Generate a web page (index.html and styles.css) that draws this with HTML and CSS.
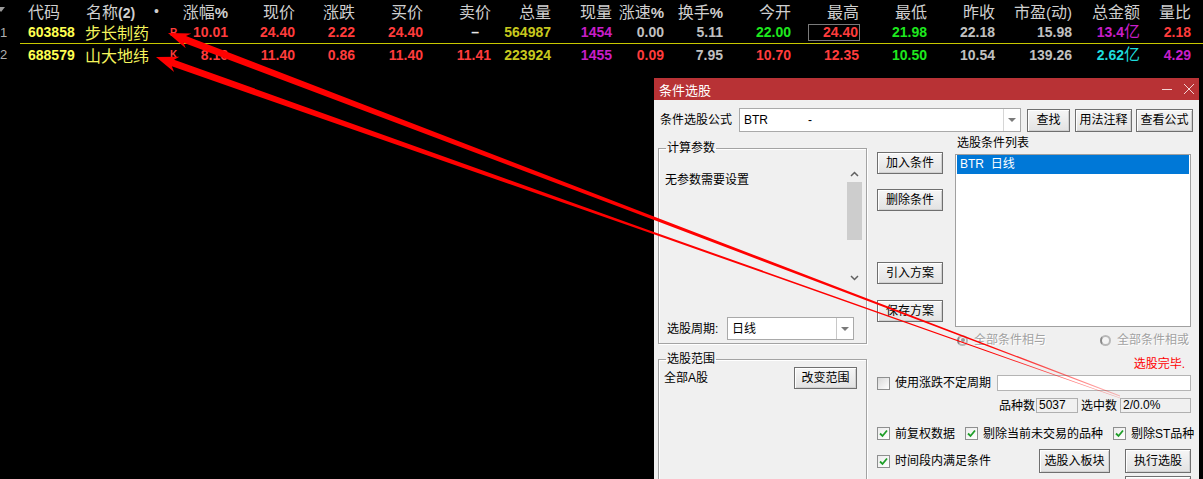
FILE: index.html
```html
<!DOCTYPE html>
<html lang="zh-CN">
<head>
<meta charset="utf-8">
<title>条件选股</title>
<link rel="stylesheet" href="styles.css">
</head>
<body>
<div class="quote">
  <div class="grid head">
    <span class="c idx"><i class="tri"></i></span>
    <span class="c l">代码</span>
    <span class="c l hname">名称<b>(2)</b></span>
    <span class="c l hdot">•</span>
    <span class="c">涨幅<b>%</b></span>
    <span class="c">现价</span>
    <span class="c">涨跌</span>
    <span class="c">买价</span>
    <span class="c">卖价</span>
    <span class="c">总量</span>
    <span class="c">现量</span>
    <span class="c">涨速<b>%</b></span>
    <span class="c">换手<b>%</b></span>
    <span class="c">今开</span>
    <span class="c">最高</span>
    <span class="c">最低</span>
    <span class="c">昨收</span>
    <span class="c">市盈<span class="par">(</span>动<span class="par">)</span></span>
    <span class="c">总金额</span>
    <span class="c">量比</span>
  </div>
  <div class="grid row r1">
    <span class="c l idx">1</span>
    <span class="c l code">603858</span>
    <span class="c l name">步长制药</span>
    <span class="c l mark">R</span>
    <span class="c red">10.01</span>
    <span class="c red">24.40</span>
    <span class="c red">2.22</span>
    <span class="c red">24.40</span>
    <span class="c wht"><span class="dash">–</span></span>
    <span class="c yel">564987</span>
    <span class="c mag">1454</span>
    <span class="c gry">0.00</span>
    <span class="c gry">5.11</span>
    <span class="c grn">22.00</span>
    <span class="c red"><span class="boxed">24.40</span></span>
    <span class="c grn">21.98</span>
    <span class="c gry">22.18</span>
    <span class="c gry">15.98</span>
    <span class="c mag">13.4<span class="yi">亿</span></span>
    <span class="c red">2.18</span>
  </div>
  <div class="sep"></div>
  <div class="grid row r2">
    <span class="c l idx">2</span>
    <span class="c l code">688579</span>
    <span class="c l name">山大地纬</span>
    <span class="c l mark">K</span>
    <span class="c red">8.16</span>
    <span class="c red">11.40</span>
    <span class="c red">0.86</span>
    <span class="c red">11.40</span>
    <span class="c red">11.41</span>
    <span class="c yel">223924</span>
    <span class="c mag">1455</span>
    <span class="c red">0.09</span>
    <span class="c gry">7.95</span>
    <span class="c red">10.70</span>
    <span class="c red">12.35</span>
    <span class="c grn">10.50</span>
    <span class="c gry">10.54</span>
    <span class="c gry">139.26</span>
    <span class="c cyn">2.62<span class="yi">亿</span></span>
    <span class="c mag">4.29</span>
  </div>
</div>

<div class="dlg">
  <div class="titlebar">
    <span class="ttl">条件选股</span>
    <span class="winctl">
      <svg width="12" height="12" viewBox="0 0 12 12" class="wmin"><path d="M1 6.5 H11" stroke="#f2d4d4" stroke-width="1"/></svg>
      <svg width="12" height="12" viewBox="0 0 12 12" class="wclose"><path d="M1 1 L11 11 M11 1 L1 11" stroke="#f2d4d4" stroke-width="1"/></svg>
    </span>
  </div>
  <div class="dbody">
    <div class="frow">
      <span class="flabel">条件选股公式</span>
      <div class="combo fcombo">
        <span class="ctext"><span class="cname">BTR</span><span>-</span></span>
        <span class="drop"><i class="caret"></i></span>
      </div>
      <button class="btn b-find">查找</button>
      <button class="btn b-use">用法注释</button>
      <button class="btn b-view">查看公式</button>
    </div>

    <div class="main">
      <div class="leftcol">
        <fieldset class="grp g1">
          <legend>计算参数</legend>
          <div class="params">
            <div class="ptext">无参数需要设置</div>
            <div class="vscroll">
              <span class="sarrow up">
                <svg width="9" height="6" viewBox="0 0 9 6"><path d="M1 5 L4.5 1.5 L8 5" fill="none" stroke="#606060" stroke-width="1.5"/></svg>
              </span>
              <span class="thumb"></span>
              <span class="sarrow down">
                <svg width="9" height="6" viewBox="0 0 9 6"><path d="M1 1 L4.5 4.5 L8 1" fill="none" stroke="#606060" stroke-width="1.5"/></svg>
              </span>
            </div>
          </div>
          <div class="period">
            <span class="plabel">选股周期:</span>
            <div class="combo pcombo">
              <span class="ctext">日线</span>
              <span class="drop"><i class="caret"></i></span>
            </div>
          </div>
        </fieldset>
        <fieldset class="grp g2">
          <legend>选股范围</legend>
          <div class="range">
            <span class="rtext">全部A股</span>
            <button class="btn b-range">改变范围</button>
          </div>
        </fieldset>
      </div>

      <div class="rightarea">
        <div class="rtop">
          <div class="midbtns">
            <button class="btn mb mb1">加入条件</button>
            <button class="btn mb mb2">删除条件</button>
            <button class="btn mb mb3">引入方案</button>
            <button class="btn mb mb4">保存方案</button>
          </div>
          <div class="listcol">
            <div class="llabel">选股条件列表</div>
            <div class="listbox">
              <div class="litem sel">BTR&nbsp;&nbsp;日线</div>
            </div>
            <div class="radios">
              <span class="radio on"><i class="rb"></i><span class="dis">全部条件相与</span></span>
              <span class="radio"><i class="rb"></i><span class="dis">全部条件相或</span></span>
            </div>
            <div class="done">选股完毕.</div>
          </div>
        </div>

        <div class="crow c-period">
          <span class="cb"></span><span class="ctx">使用涨跌不定周期</span>
          <span class="tinput"></span>
        </div>
        <div class="counts">
          <span>品种数</span><span class="field f1">5037</span>
          <span class="l2">选中数</span><span class="field f2">2/0.0%</span>
        </div>
        <div class="crow c-opts">
          <span class="opt"><span class="cb on"><svg width="11" height="11" viewBox="0 0 11 11"><path d="M2 5.5 L4.5 8 L9 2.5" fill="none" stroke="#1e9e28" stroke-width="1.8"/></svg></span><span class="ctx">前复权数据</span></span>
          <span class="opt"><span class="cb on"><svg width="11" height="11" viewBox="0 0 11 11"><path d="M2 5.5 L4.5 8 L9 2.5" fill="none" stroke="#1e9e28" stroke-width="1.8"/></svg></span><span class="ctx">剔除当前未交易的品种</span></span>
          <span class="opt"><span class="cb on"><svg width="11" height="11" viewBox="0 0 11 11"><path d="M2 5.5 L4.5 8 L9 2.5" fill="none" stroke="#1e9e28" stroke-width="1.8"/></svg></span><span class="ctx">剔除ST品种</span></span>
        </div>
        <div class="crow c-last">
          <span class="opt"><span class="cb on"><svg width="11" height="11" viewBox="0 0 11 11"><path d="M2 5.5 L4.5 8 L9 2.5" fill="none" stroke="#1e9e28" stroke-width="1.8"/></svg></span><span class="ctx">时间段内满足条件</span></span>
          <button class="btn b-block">选股入板块</button>
          <button class="btn b-run">执行选股</button>
        </div>
        <div class="crow c-more">
          <button class="btn b-run" aria-label="关闭"></button>
        </div>
      </div>
    </div>
  </div>
</div>

<svg class="arrows" width="1203" height="479" viewBox="0 0 1203 479">
  <defs>
    <linearGradient id="fade" gradientUnits="userSpaceOnUse" x1="150" y1="0" x2="1120" y2="0">
      <stop offset="0" stop-color="#ff0000"/>
      <stop offset="0.86" stop-color="#ff0000"/>
      <stop offset="1" stop-color="#ff0000" stop-opacity="0.25"/>
    </linearGradient>
  </defs>
  <polygon points="168,33 191.4,33.4 186.0,36.1 650.6,215.3 1120.1,395.6 1119.9,396.4 649.4,218.3 183.6,42.7 185.7,48.3" fill="url(#fade)"/>
  <polygon points="156,57 179.4,56.8 174.1,59.7 650.4,230.7 1120.1,397.7 1119.9,398.3 649.6,232.8 171.8,66.3 174.1,71.9" fill="url(#fade)"/>
</svg>
</body>
</html>
```

FILE: styles.css
```css
* { box-sizing: border-box; }
html, body { margin: 0; padding: 0; background: #000; }
body {
  width: 1203px;
  height: 479px;
  overflow: hidden;
  position: relative;
  font-family: "Liberation Sans", "Noto Sans CJK SC", sans-serif;
}

/* ---------- quote table ---------- */
.quote { color: #c8c8c8; }
.grid {
  display: grid;
  grid-template-columns: 28px 57px 65px 30px 48px 67px 60px 68px 68px 60px 61px 52px 59px 68px 68px 68px 68px 77px 68px 51px;
  white-space: nowrap;
}
.c { text-align: right; overflow: visible; }
.c.l { text-align: left; }
.head {
  height: 22px;
  line-height: 22px;
  font-size: 16px;
  font-family: "Noto Sans CJK SC", sans-serif;
  color: #cfcfcf;
}
.head b { font-weight: bold; font-family: "Liberation Sans", sans-serif; font-size: 15px; }
.head .par { font-family: "Liberation Sans", sans-serif; font-size: 15px; }
.head .hname { padding-left: 1px; }
.head .hname b { font-size: 14px; }
.head .hdot { padding-left: 4px; font-size: 14px; font-family: "Liberation Sans", sans-serif; }
.tri {
  display: block;
  width: 0; height: 0;
  margin-top: 7px;
  border-left: 4px solid transparent;
  border-right: 4px solid transparent;
  border-top: 5px solid #9a9a9a;
  margin-left: -3px;
}
.row { font-size: 14px; font-weight: bold; }
.r1 { height: 21px; line-height: 21px; }
.r2 { height: 22px; line-height: 22px; }
.row .idx { font-weight: normal; font-size: 13px; color: #b0b0b0; margin-left: 0; }
.code { color: #ffff50; }
.name { color: #f4f45c; font-weight: normal; font-size: 16px; font-family: "Noto Sans CJK SC", sans-serif; }
.mark { color: #ff3c3c; font-size: 10px; padding-left: 20px; }
.red { color: #ff3c3c; }
.wht { color: #e8e8e8; }
.yel { color: #c8c81e; }
.mag { color: #c81ec8; }
.gry { color: #c0c0c0; }
.grn { color: #1ee81e; }
.cyn { color: #1edcdc; }
.dash { padding-right: 12px; }
.yi { font-weight: normal; font-size: 16px; font-family: "Noto Sans CJK SC", sans-serif; line-height: 14px; }
.boxed {
  display: inline-block;
  border: 1px solid #7a7a7a;
  line-height: 15px;
  padding: 0 1px 0 14px;
  margin-right: -1px;
}
.sep { height: 1px; margin-left: 20px; background: #c8c800; }

/* ---------- dialog ---------- */
.dlg {
  position: absolute;
  left: 654px;
  top: 78px;
  width: 545px;
  height: 420px;
  background: #f0f0f0;
  color: #000;
  font-size: 12px;
  font-family: "Liberation Sans", "Noto Sans CJK SC", sans-serif;
}
.titlebar {
  height: 22px;
  background: #b83235;
  color: #fff;
  display: flex;
  align-items: center;
  padding-left: 5px;
  font-size: 13px;
}
.ttl { flex: 1; }
.winctl { display: flex; gap: 10px; padding-right: 4px; }
.wmin, .wclose { display: block; }

.dbody { position: relative; }
.frow {
  display: flex;
  align-items: center;
  height: 24px;
  margin-top: 8px;
  padding-left: 6px;
}
.flabel { width: 79px; line-height: 14px; }
.combo {
  display: flex;
  align-items: stretch;
  background: #fff;
  border: 1px solid #a9a9a9;
}
.ctext { flex: 1; display: flex; align-items: center; padding-left: 4px; line-height: 14px; }
.cname { width: 64px; }
.drop {
  width: 17px;
  border-left: 1px solid #d6d6d6;
  display: flex;
  align-items: center;
  justify-content: center;
}
.caret {
  display: block;
  width: 0; height: 0;
  border-left: 4px solid transparent;
  border-right: 4px solid transparent;
  border-top: 4px solid #7a7a7a;
}
.fcombo { width: 282px; height: 24px; }
.btn {
  font: inherit;
  font-size: 12px;
  color: #000;
  padding: 0;
  height: 23px;
  border: 1px solid #6f6f6f;
  background: linear-gradient(#f6f6f6, #e2e2e2);
  box-shadow: inset 1px 1px 0 #fff, inset -1px -1px 0 #d0d0d0;
  line-height: 14px;
}
.b-find { width: 43px; margin-left: 6px; }
.b-use { width: 57px; margin-left: 5px; }
.b-view { width: 57px; margin-left: 4px; }

.main { display: flex; margin-top: 4px; padding-left: 4px; }
.leftcol { width: 209px; }
.grp {
  margin: 0;
  padding: 0;
  min-width: 0;
  border: 1px solid #a3a3a3;
  box-shadow: 1px 1px 0 #fff, inset 1px 1px 0 #fff;
}
.grp legend {
  margin-left: 7px;
  padding: 0 1px;
  line-height: 14px;
  height: 14px;
}
.g1 { margin-top: 5px; padding-bottom: 3px; }
.params { display: flex; height: 124px; margin-top: 11px; }
.ptext { flex: 1; padding: 7px 0 0 6px; line-height: 14px; }
.vscroll {
  width: 15px;
  margin-right: 4px;
  display: flex;
  flex-direction: column;
  align-items: center;
}
.sarrow { height: 16px; display: flex; align-items: center; justify-content: center; }
.thumb { display: block; width: 15px; height: 58px; background: #cdcdcd; }
.sarrow.down { margin-top: auto; margin-bottom: 4px; }
.period { display: flex; align-items: center; margin-top: 27px; height: 23px; padding-left: 8px; }
.plabel { width: 60px; line-height: 14px; }
.pcombo { width: 127px; height: 23px; }
.pcombo .drop { border-left-color: #c8c8c8; }

.g2 { margin-top: 8px; height: 140px; }
.range { display: flex; align-items: center; height: 22px; margin-top: 1px; padding-left: 5px; }
.rtext { flex: 1; line-height: 14px; }
.b-range { width: 63px; height: 22px; margin-right: 9px; }

.rightarea { width: 314px; margin-left: 10px; }
.rtop { display: flex; height: 235px; }
.midbtns { width: 66px; display: flex; flex-direction: column; }
.mb { width: 66px; height: 22px; }
.mb1 { margin-top: 16px; }
.mb2 { margin-top: 15px; }
.mb3 { margin-top: 51px; }
.mb4 { margin-top: 16px; }
.listcol { width: 236px; margin-left: 12px; }
.llabel { line-height: 14px; padding-left: 2px; }
.listbox {
  margin-top: 4px;
  height: 173px;
  background: #fff;
  border: 1px solid #a0a0a0;
  padding: 0 1px;
}
.litem { height: 19px; line-height: 19px; padding-left: 3px; }
.litem.sel { background: #0078d7; color: #fff; }
.radios {
  display: flex;
  justify-content: space-between;
  margin-top: 6px;
  height: 14px;
  line-height: 14px;
  padding: 0 2px 0 2px;
}
.radio { display: flex; align-items: center; }
.rb {
  display: block;
  width: 11px; height: 11px;
  border-radius: 50%;
  border: 2px solid #b8b8b8;
  border-left-color: #8a8a8a;
  margin-right: 6px;
  background: #f4f4f4;
  position: relative;
}
.radio.on .rb::after {
  content: "";
  position: absolute;
  left: 1.5px; top: 1.5px;
  width: 4px; height: 4px;
  border-radius: 50%;
  background: #9a9a9a;
}
.dis { color: #a2a2a2; text-shadow: 1px 1px 0 #fff; }
.done {
  margin-top: 10px;
  text-align: right;
  padding-right: 6px;
  color: #ff0000;
  line-height: 14px;
}

.crow { display: flex; align-items: center; }
.cb {
  display: flex;
  align-items: center;
  justify-content: center;
  width: 13px; height: 13px;
  border: 1px solid #8e8f8f;
  background: linear-gradient(135deg, #d8d8d8, #ffffff);
  flex: none;
}
.cb.on { background: linear-gradient(135deg, #ececec, #ffffff); }
.cb svg { display: block; }
.ctx { margin-left: 5px; line-height: 14px; white-space: nowrap; }
.c-period { margin-top: 4px; height: 16px; }
.tinput { margin-left: auto; width: 194px; height: 16px; background: #fff; border: 1px solid #b4b4b4; }
.counts {
  display: flex;
  align-items: center;
  justify-content: flex-end;
  margin-top: 7px;
  height: 15px;
  line-height: 14px;
}
.field {
  height: 15px;
  border: 1px solid #b0b0b0;
  background: #f0f0f0;
  padding-left: 2px;
  line-height: 13px;
}
.f1 { width: 42px; margin-left: 1px; }
.l2 { margin-left: 3px; }
.f2 { width: 71px; margin-left: 3px; }
.c-opts { margin-top: 14px; height: 13px; gap: 10px; }
.opt { display: flex; align-items: center; }
.c-last { margin-top: 9px; height: 24px; }
.b-block { width: 71px; height: 24px; margin-left: auto; }
.b-run { width: 66px; height: 24px; margin-left: 15px; }
.c-more { margin-top: 3px; justify-content: flex-end; }

/* ---------- overlay arrows ---------- */
.arrows {
  position: absolute;
  left: 0; top: 0;
  pointer-events: none;
}
```
